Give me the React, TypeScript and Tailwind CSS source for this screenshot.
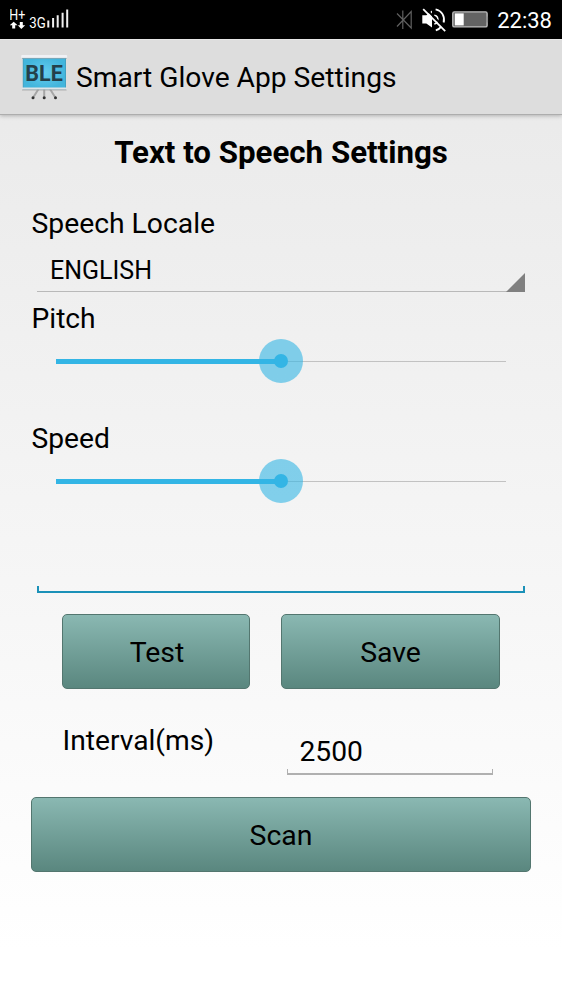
import { useState } from 'react';

function StatusBar() {
    return (
        <div className="h-[39px] bg-black flex items-center justify-between pl-[10px] pr-[10px] text-white">
            <svg width="60" height="39" viewBox="10 0 60 39" fill="none">
                <text x="9.3" y="19.8" fontSize="14" fill="#fff" fontFamily="Roboto" textLength="16" lengthAdjust="spacingAndGlyphs">H+</text>
                <path d="M13.7 21.7 L17.6 25.3 H15.2 V28.6 H12.2 V25.3 H9.8 Z" fill="#fff" />
                <path d="M21.3 28.9 L25.2 25.3 H22.8 V22 H19.8 V25.3 H17.8 Z" fill="#fff" />
                <text x="29.3" y="27.5" fontSize="14" fill="#fff" fontFamily="Roboto" textLength="16.5" lengthAdjust="spacingAndGlyphs">3G</text>
                <path d="M48.3 20.5V27.5M53.1 18V27.5M57.7 15.3V27.5M62.6 12.7V27.5M67.2 9.5V27.5" stroke="#f0f0f0" strokeWidth="2" />
            </svg>

            <div className="flex items-center">
                <svg width="93" height="39" viewBox="396 0 93 39" fill="none">
                    <path d="M397 13.5 L411.2 28 V11.5 L397 26.5 M402.8 10.5V29" stroke="#606060" strokeWidth="1.2" />
                    {/* muted speaker */}
                    <path d="M422.3 15.2 H426.3 L432 10.5 V27.5 L426.3 23.6 H422.3 Z" fill="#fff" />
                    <path d="M434.3 15.2 Q438.7 16 437.6 21.3 Q436.8 23.6 434.3 24" stroke="#fff" strokeWidth="1.6" />
                    <path d="M435.6 9.3 C442.2 10.7 445.2 17 443.6 22.5 M441.2 26.6 C439.6 28.8 437.8 29.8 435.8 30.4" stroke="#fff" strokeWidth="1.8" />
                    <path d="M424.8 7.8 L446.5 29.6" stroke="#000" strokeWidth="2" />
                    <path d="M423.2 9.2 L445.2 31.2" stroke="#fff" strokeWidth="1.8" />
                    {/* battery */}
                    <rect x="452.8" y="11.9" width="34.3" height="15" rx="1.5" fill="#636363" stroke="#bdbdbd" strokeWidth="1.4" />
                    <rect x="454.8" y="13.4" width="8.9" height="12" fill="#fff" />
                    <path d="M487.3 16.5V22.5" stroke="#8a8a8a" strokeWidth="1.5" />
                </svg>
                <span className="ml-2 text-[22px] leading-[41px] h-[39px]">22:38</span>
            </div>
        </div>
    );
}

function BoardIcon() {
    return (
        <svg width="48" height="48" viewBox="20 53 48 48" fill="none">
            <defs>
                <radialGradient id="board">
                    <stop offset="0" stopColor="#65cdf0" />
                    <stop offset="1" stopColor="#42b5dc" />
                </radialGradient>
            </defs>
            <path d="M38.5 89 L33.2 97.5 M44.2 89 V97.5 M50 89 L55.3 97.5" stroke="#a6a6a6" strokeWidth="2" />
            <circle cx="33" cy="97.7" r="1.5" fill="#333" />
            <circle cx="44.2" cy="97.7" r="1.5" fill="#333" />
            <circle cx="55.5" cy="97.7" r="1.5" fill="#333" />
            <rect x="23.2" y="57" width="42.4" height="32" fill="url(#board)" stroke="#3299bd" strokeWidth="0.8" />
            <rect x="21.2" y="55" width="46" height="3.2" rx="1" fill="#f0f1f5" />
            <path d="M22 58.4H66.6" stroke="#7b9ba8" strokeWidth="0.8" />
            <rect x="21.6" y="87.6" width="45.2" height="2" rx="1" fill="#dfe5e8" />
            <path d="M22 90H66.6" stroke="#9c9c9c" strokeWidth="0.7" />
            <text x="25.3" y="80.8" fontSize="22" fontWeight="700" fill="#24404b" fontFamily="Roboto" textLength="37.5" lengthAdjust="spacingAndGlyphs">BLE</text>
        </svg>
    );
}

function Slider({ value }: { value: number }) {
    return (
        <div className="mx-[25px] h-11 grid items-center">
            <div className="col-start-1 row-start-1 h-px bg-[#c2c2c2]"></div>
            <div className="col-start-1 row-start-1 h-[5px] bg-[#33b5e5]" style={{ width: `${value}%` }}></div>
            <div
                className="col-start-1 row-start-1 size-11 -translate-x-1/2 rounded-full bg-[#33b5e5]/60 flex items-center justify-center"
                style={{ marginLeft: `${value}%` }}
            >
                <div className="size-[14px] rounded-full bg-[#33b5e5]"></div>
            </div>
        </div>
    );
}

function Button({ label, className }: { label: string; className: string }) {
    return (
        <button className={`h-[75px] rounded-[5px] border-[1.5px] border-[#53766f] bg-linear-to-b from-[#8ab8b2] to-[#5a877f] pt-[4px] text-[28.4px] ${className}`}>
            {label}
        </button>
    );
}

export default function App() {
    const [interval, setInterval] = useState('2500');

    return (
        <div className="w-[562px] h-[1000px] overflow-hidden font-[Roboto,sans-serif] text-black bg-linear-to-b from-[#e8e8e8] to-white to-95%">
            <StatusBar />

            {/* Action bar */}
            <header className="h-[76px] pl-5 flex items-center bg-[#dddddd] border-t border-t-[#e7e7e7] border-b border-b-[#adadad] shadow-[0_1px_4px_rgba(0,0,0,0.25)]">
                <BoardIcon />
                <span className="ml-[8px] pt-[2px] text-[28.2px] leading-[36px] whitespace-nowrap">Smart Glove App Settings</span>
            </header>

            <main className="px-[31px]">
                <h1 className="pt-[18px] text-center text-[31.25px] leading-[40px] font-bold whitespace-nowrap">Text to Speech Settings</h1>

                <div className="mt-[31px] pl-[0.5px] text-[28.3px] leading-[40px]">Speech Locale</div>
                <div className="ml-[6px] mr-[6px] h-[48px] pl-[13px] border-b-[1.5px] border-[#b9b9b9] flex items-end justify-between">
                    <span className="text-[25px] leading-[41px]">ENGLISH</span>
                    <svg width="19" height="19" viewBox="0 0 19 19" className="-mb-px">
                        <path d="M19 0V19H0Z" fill="#808080" />
                    </svg>
                </div>

                <div className="mt-[7px] pl-[0.5px] text-[28.2px] leading-[40px]">Pitch</div>
                <Slider value={50} />

                <div className="mt-[36px] pl-[0.5px] text-[28.2px] leading-[40px]">Speed</div>
                <Slider value={50} />

                {/* Focused text field */}
                <div className="mx-[6px] mt-[83px] h-[7px] border-x-2 border-b-2 border-[#1b91b8]"></div>

                <div className="mt-[21px] ml-[31px] flex gap-[31px]">
                    <Button label="Test" className="w-[188px] pl-[2px]" />
                    <Button label="Save" className="w-[219px]" />
                </div>

                <div className="mt-[32px] ml-[31px] h-[54px] flex">
                    <label htmlFor="interval" className="w-[225px] pl-[0.5px] text-[28.2px] leading-[40px]">Interval(ms)</label>
                    <div className="w-[206px] flex flex-col">
                        <input
                            id="interval"
                            value={interval}
                            onChange={(e) => setInterval(e.target.value)}
                            className="mt-[12px] h-[38px] pl-[12.5px] w-full text-[28.2px] bg-transparent outline-none"
                        />
                        <div className="h-[6px] -mt-[2px] border-x-[1.5px] border-b-2 border-[#b0b0b0]"></div>
                    </div>
                </div>

                <Button label="Scan" className="mt-[22px] w-[500px]" />
            </main>
        </div>
    );
}
